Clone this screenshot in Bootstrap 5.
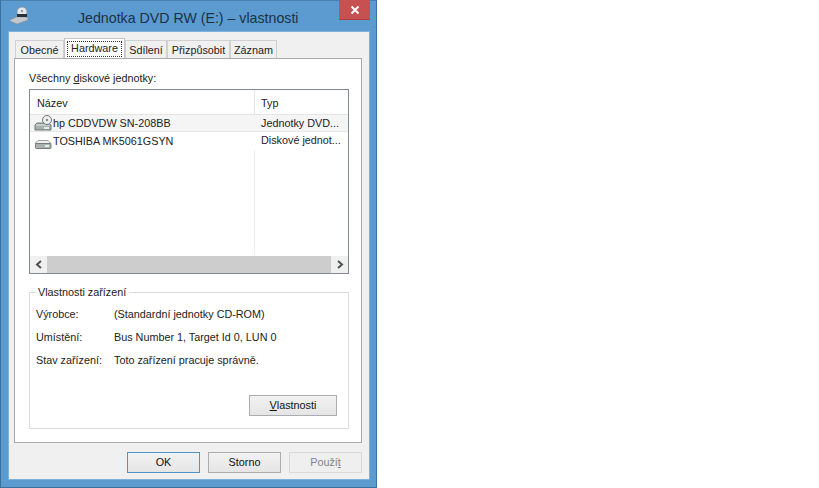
<!DOCTYPE html>
<html lang="cs">

<head>
    <meta charset="utf-8">
    <title>Jednotka DVD RW (E:) – vlastnosti</title>
    <link rel="stylesheet" href="https://cdn.jsdelivr.net/npm/bootstrap@5.3.0/dist/css/bootstrap.min.css">
    <style>
        html, body { height: 100%; background: #fff; overflow: hidden; }
        body, .btn, .nav-link { font-family: "Liberation Sans", Arial, sans-serif; font-size: 10.8px; color: #222; line-height: 16px; }
        .okno { width: 377px; height: 488px; background: #5b9bd0; border: 1px solid #3d6f9c; border-top-color: #4a7fae; padding: 0 7px 7px; }
        .titulek { height: 30px; }
        .titulek-ikona { width: 24px; margin-left: 1px; margin-top: -2px; }
        .titulek-text { font-size: 14.2px; margin-left: 45px; margin-top: 4px; color: #1d3146; white-space: nowrap; line-height: 20px; }
        .zavrit { position: absolute; top: -1px; right: -1px; width: 31px; height: 20px; background: #c75050; border-bottom: 1px solid #b04040; }
        .obsah { height: 449px; background: #f0f0f0; border: 1px solid #7fb0d8; padding: 6px 6px 0 5px; width: 362px; }
        .zalozky { height: 20px; padding-left: 1px; border: 0; flex-wrap: nowrap; align-items: flex-end; }
        .zalozky .nav-link { height: 18px; padding: 0; margin: 0; border: 1px solid #d0d0d0; border-bottom: 0; border-radius: 0; background: #f0f0f0; color: #222; line-height: 18px; white-space: nowrap; text-align: center; }
        .zalozky .nav-link.active { height: 20px; background: #fff; border-color: #c4c4c4; padding: 2px 2px 0; color: #222; }
        .z-obecne { width: 49px; }
        .z-hardware { width: 61px; }
        .z-sdileni { width: 42px; }
        .z-prizpusobit { width: 63px; }
        .z-zaznam { width: 47px; }
        .fokus { border: 1px dotted #333; display: block; line-height: 12px; height: 16px; }
        .panel-obsah { width: 348px; height: 385px; background: #fff; border: 1px solid #a9a9a9; padding: 11px 14px 0; }
        .nadpis { height: 19px; line-height: 16px; }
        .seznam { width: 320px; height: 185px; border: 1px solid #828790; position: relative; }
        .hlavicka { height: 25px; border-bottom: 1px solid #e5e5e5; line-height: 27px; }
        .sl-nazev { width: 225px; flex: none; padding-left: 7px; border-right: 1px solid #e5e5e5; white-space: nowrap; }
        .sl-typ { padding-left: 6px; white-space: nowrap; }
        .radek { height: 18px; line-height: 16px; }
        .radek.vybrany { background: #f5f5f5; height: 17px; border-bottom: 1px solid #e8e8e8; }
        .radek .sl-nazev { padding-left: 4px; border-right-color: transparent; display: flex; align-items: center; }
        .radek svg { flex: none; }
        .vypln { height: 105px; }
        .vypln-nazev { width: 225px; border-right: 1px solid #eee; height: 100%; }
        .posuvnik { height: 17px; background: #f0f0f0; position: absolute; left: 0; right: 0; bottom: 0; }
        .posuvnik-sipka { width: 17px; height: 17px; flex: none; }
        .posuvnik-palec { background: #cdcdcd; flex: 1; }
        fieldset.skupina { width: 320px; height: 144px; margin-top: 11px; border: 1px solid #dcdcdc; padding: 0 6px; position: relative; }
        fieldset.skupina legend { float: none; width: auto; font-size: 10.8px; line-height: 14px; margin: 0; padding: 0 3px 0 2px; background: #fff; }
        .vlastnost { height: 23px; line-height: 23px; white-space: nowrap; }
        .vlastnost-popis { width: 78px; }
        .prvni { margin-top: 4px; }
        .tlacitko { background: linear-gradient(#f2f2f2, #e5e5e5); border: 1px solid #acacac; border-radius: 0; padding: 0; height: 21px; line-height: 19px; color: #111; }
        .tlacitko:disabled { background: #efefef; border-color: #d9d9d9; color: #838383; opacity: 1; }
        .t-vlastnosti { position: absolute; left: 219px; top: 96px; width: 88px; }
        .t-ok { width: 73px; margin-left: 113px; }
        .tlacitko.t-ok { border-color: #4f94c9; }
        .t-storno { width: 73px; margin-left: 8px; }
        .tlacitka { padding-top: 9px; }
    </style>
</head>

<body>
    <div class="okno position-relative">
        <div class="titulek d-flex align-items-center position-relative">
            <svg class="titulek-ikona" width="24" height="20" viewBox="0 0 24 20">
                <path d="M1 15 L12 10 L19 13 L19 15 L8 19 L1 16 Z" fill="#c3c8cc" stroke="#8b9196" stroke-width="0.6"/>
                <circle cx="13" cy="7" r="5" fill="#e4e8ea" stroke="#8a9096" stroke-width="0.8"/>
                <circle cx="13" cy="6" r="1.2" fill="#8d98a2"/>
                <rect x="8" y="9" width="10" height="3" fill="#2b3038"/>
            </svg>
            <div class="titulek-text">Jednotka DVD RW (E:) – vlastnosti</div>
            <div class="zavrit d-flex align-items-center justify-content-center">
                <svg width="10" height="10" viewBox="0 0 10 10"><path d="M1.5 1.5 L8.5 8.5 M8.5 1.5 L1.5 8.5" stroke="#fff" stroke-width="2"/></svg>
            </div>
        </div>

        <div class="obsah">
            <ul class="nav nav-tabs zalozky">
                <li class="nav-item"><a class="nav-link z-obecne" href="#">Obecné</a></li>
                <li class="nav-item"><a class="nav-link active z-hardware" href="#"><span class="fokus">Hardware</span></a></li>
                <li class="nav-item"><a class="nav-link z-sdileni" href="#">Sdílení</a></li>
                <li class="nav-item"><a class="nav-link z-prizpusobit" href="#">Přizpůsobit</a></li>
                <li class="nav-item"><a class="nav-link z-zaznam" href="#">Záznam</a></li>
            </ul>

            <div class="panel-obsah">
                <div class="nadpis">Všechny <u>d</u>iskové jednotky:</div>

                <div class="seznam">
                    <div class="hlavicka d-flex">
                        <div class="sl-nazev">Název</div>
                        <div class="sl-typ">Typ</div>
                    </div>
                    <div class="radek vybrany d-flex">
                        <div class="sl-nazev">
                            <svg width="19" height="17" viewBox="0 0 19 17">
                                <path d="M3 8 H13 L17 10 V15 H1 V10 Z" fill="#a7b0ad" stroke="#6f7874"/>
                                <path d="M2 10 H16" stroke="#e4e8e6"/>
                                <circle cx="13" cy="5" r="4.5" fill="#eef1f3" stroke="#6d7479"/>
                                <circle cx="13" cy="5" r="1.2" fill="#7f8a94"/>
                                <rect x="10" y="12" width="5" height="2" fill="#e6ebe8"/>
                            </svg>
                            hp CDDVDW SN-208BB
                        </div>
                        <div class="sl-typ">Jednotky DVD...</div>
                    </div>
                    <div class="radek d-flex">
                        <div class="sl-nazev">
                            <svg width="19" height="17" viewBox="0 0 19 17">
                                <path d="M4 7.5 H14 L17 10.5 H1 Z" fill="#f0f0f0" stroke="#9a9f9c"/>
                                <rect x="1.5" y="10.5" width="15.5" height="5" rx="1" fill="#a8b3ae" stroke="#727b77"/>
                                <rect x="11" y="12" width="4" height="2" fill="#e6ebe8"/>
                            </svg>
                            TOSHIBA MK5061GSYN
                        </div>
                        <div class="sl-typ">Diskové jednot...</div>
                    </div>
                    <div class="vypln"><div class="vypln-nazev"></div></div>
                    <div class="posuvnik d-flex">
                        <div class="posuvnik-sipka d-flex align-items-center justify-content-center">
                            <svg width="8" height="9" viewBox="0 0 8 9"><path d="M6 1 L2 4.5 L6 8" fill="none" stroke="#505050" stroke-width="2"/></svg>
                        </div>
                        <div class="posuvnik-palec"></div>
                        <div class="posuvnik-sipka d-flex align-items-center justify-content-center">
                            <svg width="8" height="9" viewBox="0 0 8 9"><path d="M2 1 L6 4.5 L2 8" fill="none" stroke="#505050" stroke-width="2"/></svg>
                        </div>
                    </div>
                </div>

                <fieldset class="skupina">
                    <legend>Vlastnosti zařízení</legend>
                    <div class="vlastnost d-flex prvni">
                        <div class="vlastnost-popis">Výrobce:</div>
                        <div>(Standardní jednotky CD-ROM)</div>
                    </div>
                    <div class="vlastnost d-flex">
                        <div class="vlastnost-popis">Umístění:</div>
                        <div>Bus Number 1, Target Id 0, LUN 0</div>
                    </div>
                    <div class="vlastnost d-flex">
                        <div class="vlastnost-popis">Stav zařízení:</div>
                        <div>Toto zařízení pracuje správně.</div>
                    </div>
                    <button type="button" class="btn tlacitko t-vlastnosti"><u>V</u>lastnosti</button>
                </fieldset>
            </div>

            <div class="tlacitka d-flex">
                <button type="button" class="btn tlacitko t-ok">OK</button>
                <button type="button" class="btn tlacitko t-storno">Storno</button>
                <button type="button" class="btn tlacitko t-storno" disabled>Použí<u>t</u></button>
            </div>
        </div>
    </div>

    <script src="https://cdn.jsdelivr.net/npm/bootstrap@5.3.0/dist/js/bootstrap.bundle.min.js"></script>
</body>

</html>
